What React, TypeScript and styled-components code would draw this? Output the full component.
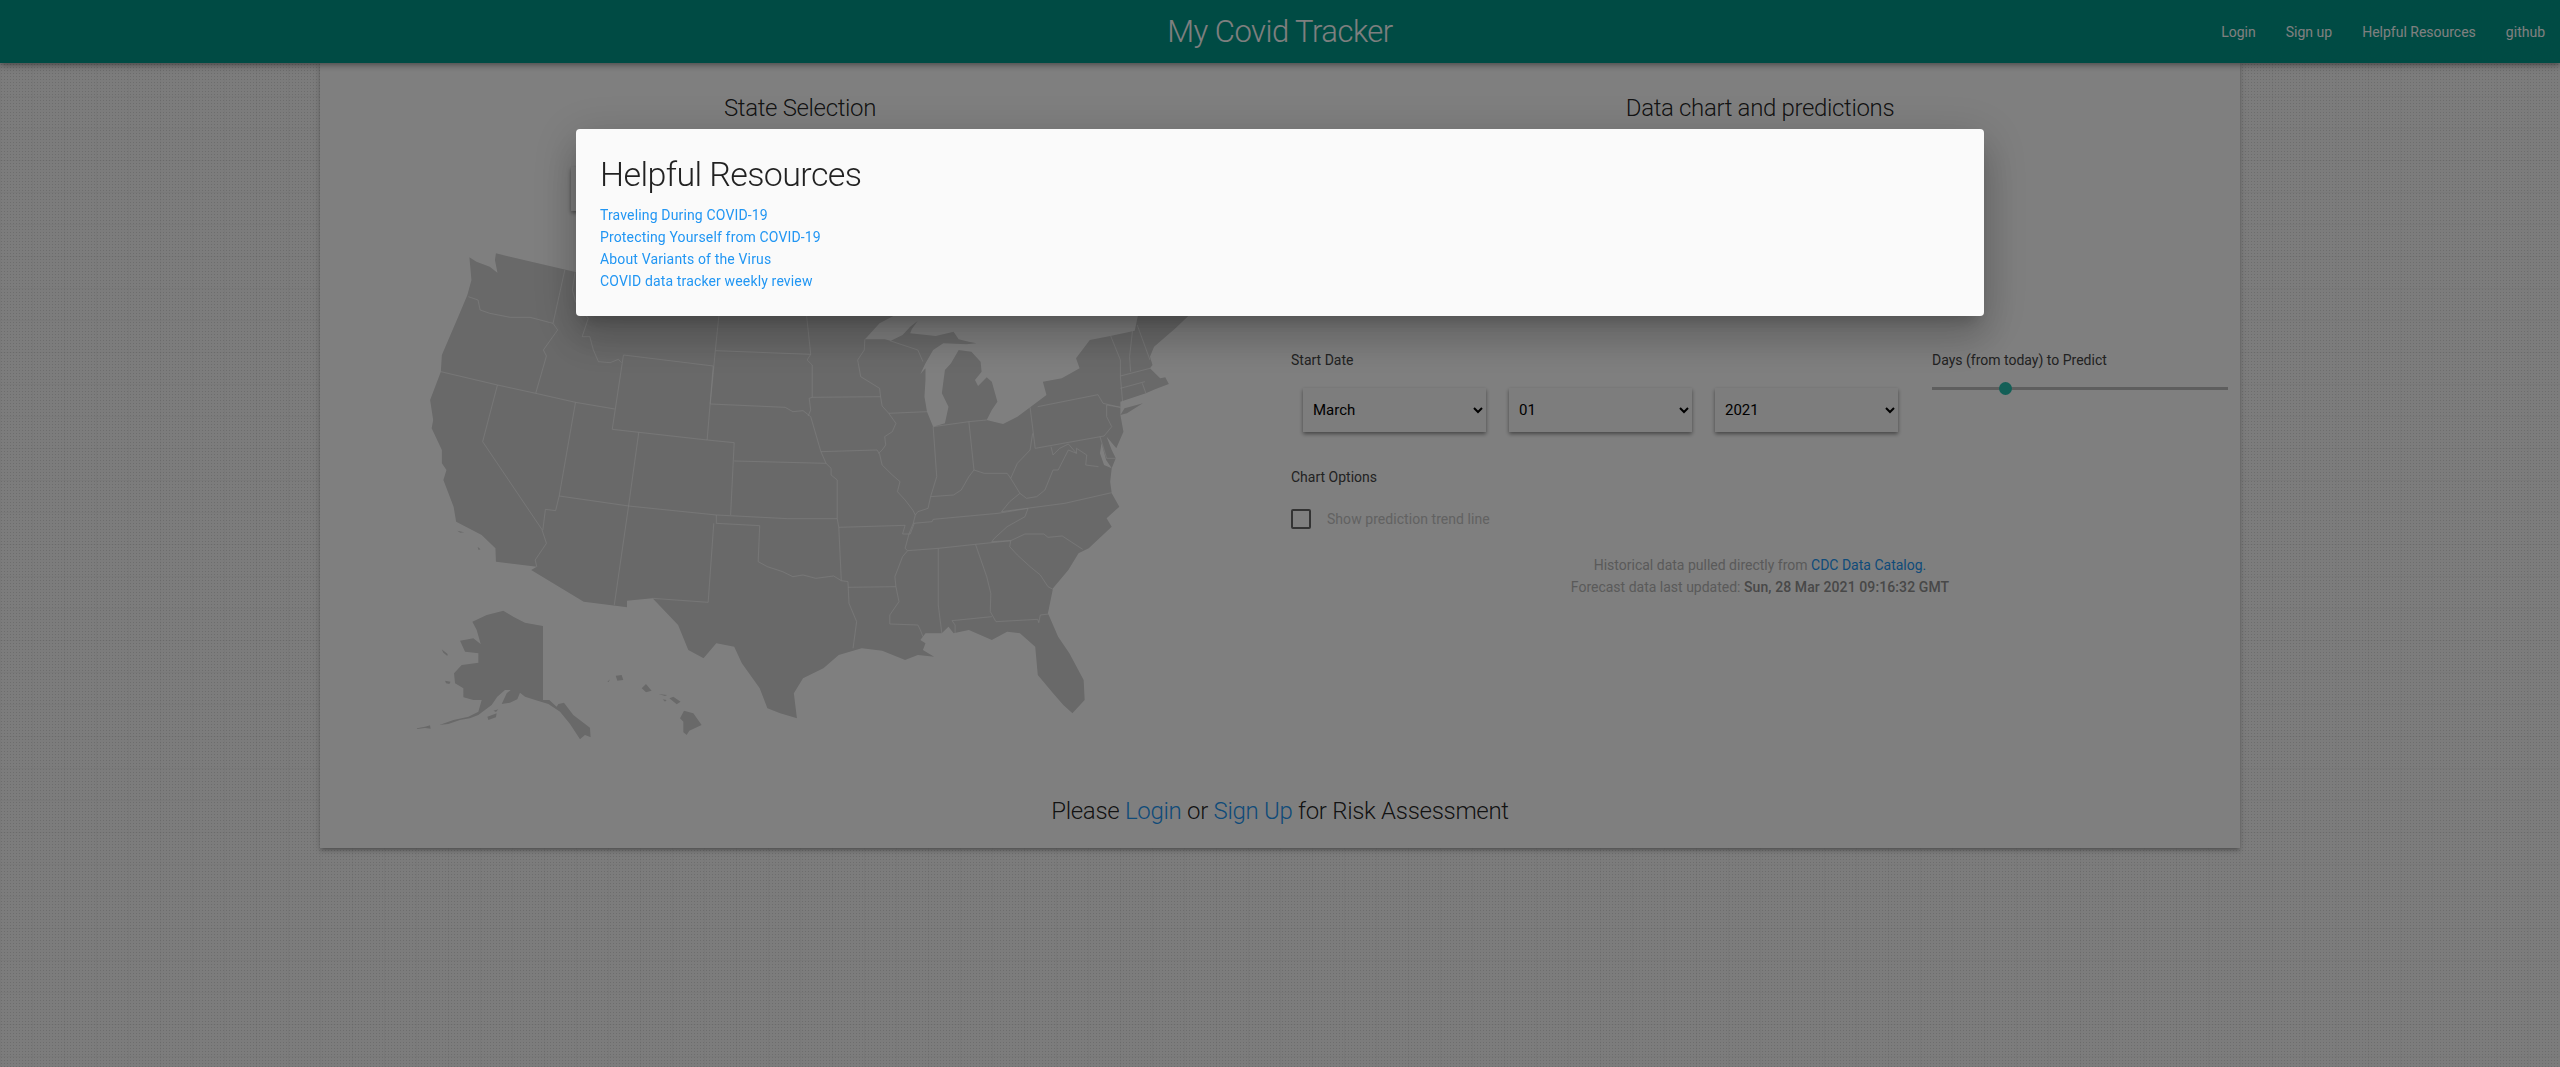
import React from "react";
import styled, { createGlobalStyle } from "styled-components";

const GlobalStyle = createGlobalStyle`
  html, body {
    margin: 0;
    height: 100%;
  }
  body {
    font-family: Roboto, "Open Sans", sans-serif;
    font-weight: 300;
    color: rgba(0, 0, 0, 0.87);
    background-color: #f8f8f8;
    background-image:
      linear-gradient(rgba(0, 0, 0, 0.025) 1px, transparent 1px),
      linear-gradient(90deg, rgba(0, 0, 0, 0.025) 1px, transparent 1px),
      radial-gradient(rgba(0, 0, 0, 0.12) 0.8px, transparent 1px);
    background-size: 32px 32px, 32px 32px, 3px 3px;
  }
`;

const Header = styled.header`
  position: relative;
  z-index: 2;
  height: 63px;
  background: #009688;
  color: #fff;
  display: flex;
  align-items: center;
  justify-content: flex-end;
  box-shadow: 0 2px 4px -1px rgba(0, 0, 0, 0.2), 0 4px 5px rgba(0, 0, 0, 0.14),
    0 1px 10px rgba(0, 0, 0, 0.12);
`;

const Brand = styled.div`
  position: absolute;
  left: 0;
  right: 0;
  text-align: center;
  font-size: 31px;
  letter-spacing: -0.5px;
`;

const NavLink = styled.a`
  position: relative;
  font-size: 14px;
  font-weight: 400;
  padding: 0 15px;
  color: #fff;
`;

const Card = styled.main`
  width: 1920px;
  height: 785px;
  margin: 0 auto;
  background: #fff;
  box-shadow: 0 3px 3px -2px rgba(0, 0, 0, 0.2), 0 3px 4px rgba(0, 0, 0, 0.14),
    0 1px 8px rgba(0, 0, 0, 0.12);
`;

const Columns = styled.div`
  display: grid;
  grid-template-columns: 960px 960px;
  height: 687px;
`;

const Column = styled.section`
  padding-top: 29px;
`;

const ColumnTitle = styled.h2`
  margin: 0;
  font-size: 24px;
  line-height: 33px;
  font-weight: 300;
  text-align: center;
  letter-spacing: -0.35px;
`;

const StateSelect = styled.select`
  display: block;
  width: 458px;
  height: 44px;
  margin: 42px auto 29px;
  border: 0;
  background: #fafafa;
  box-shadow: 0 2px 4px rgba(0, 0, 0, 0.4);
`;

const MapFrame = styled.svg`
  display: block;
  margin-left: 90px;
`;

const Land = styled.path`
  fill: #d3d3d3;
  fill-rule: evenodd;
`;

const Borders = styled.path`
  fill: none;
  stroke: rgba(255, 255, 255, 0.6);
  stroke-width: 1;
  stroke-linejoin: round;
  vector-effect: non-scaling-stroke;
`;

const ChartSlot = styled.div`
  height: 224px;
`;

const Controls = styled.div`
  padding-left: 11px;
`;

const ControlRow = styled.div`
  display: flex;
`;

const StartDate = styled.div`
  width: 641px;
`;

const Predict = styled.div`
  width: 296px;
`;

const Label = styled.div`
  font-size: 14px;
  line-height: 22px;
  font-weight: 400;
  color: #444;
`;

const SelectRow = styled.div`
  display: flex;
  gap: 23px;
  margin: 17px 0 34px 12px;
`;

const DateSelect = styled.select`
  width: 183px;
  height: 44px;
  padding-left: 6px;
  border: 0;
  border-radius: 0;
  background: #fafafa;
  color: #000;
  font-family: Roboto, sans-serif;
  font-size: 15px;
  box-shadow: 0 2px 4px rgba(0, 0, 0, 0.45);
`;

const Track = styled.div`
  position: relative;
  height: 3px;
  margin-top: 16px;
  background: #bdbdbd;
`;

const Thumb = styled.span<{ $left: number }>`
  position: absolute;
  top: -5px;
  left: ${(p) => p.$left}px;
  width: 13px;
  height: 13px;
  border-radius: 50%;
  background: #26bfae;
`;

const CheckRow = styled.label`
  display: flex;
  align-items: center;
  gap: 16px;
  margin-top: 21px;
  font-size: 14px;
  font-weight: 400;
  letter-spacing: 0.05px;
  color: #c4c4c4;
`;

const CheckBox = styled.span`
  box-sizing: border-box;
  width: 20px;
  height: 20px;
  border: 2px solid #666;
  border-radius: 2px;
`;

const Notes = styled.div`
  margin-top: 25px;
  text-align: center;
  font-size: 14px;
  line-height: 22px;
  font-weight: 400;
  color: #b4b4b4;
`;

const Strong = styled.b`
  font-weight: 500;
  letter-spacing: 0.1px;
  color: #909090;
`;

const TextLink = styled.a`
  color: #2196f3;
`;

const Footer = styled.div`
  padding-top: 45px;
  text-align: center;
  font-size: 24px;
  line-height: 33px;
  letter-spacing: -0.3px;
`;

const Overlay = styled.div`
  position: fixed;
  inset: 0;
  z-index: 10;
  background: rgba(0, 0, 0, 0.5);
  display: flex;
  justify-content: center;
  align-items: flex-start;
  padding-top: 129px;
`;

const Modal = styled.div`
  box-sizing: border-box;
  width: 1408px;
  height: 187px;
  padding: 24px;
  background: #fafafa;
  border-radius: 4px;
  box-shadow: 0 11px 15px -7px rgba(0, 0, 0, 0.2), 0 24px 38px 3px rgba(0, 0, 0, 0.14),
    0 9px 46px 8px rgba(0, 0, 0, 0.12);
`;

const ModalTitle = styled.h2`
  margin: 0 0 9px;
  font-size: 34px;
  line-height: 42px;
  font-weight: 300;
  letter-spacing: -0.6px;
`;

const ResourceLink = styled.a`
  display: block;
  font-size: 14px;
  line-height: 22px;
  font-weight: 400;
  letter-spacing: 0.15px;
  color: #2196f3;
`;

// traced from the reference, x/1.96 and y/3 against page point (400, 300)
const LAND =
  "M136,-128 150,-115 176,-100 191,-82 186,-120 188,-140 346,-83 967,0 967,48 940,70 915,112 911,118 950,118 962,122 985,105 1000,80 1015,62 1003,88 1000,100 1050,108 1085,95 1095,118 1115,125 1130,130 1110,133 1065,130 1045,150 1030,190 1020,222 1030,205 1030,240 1028,290 1033,335 1045,380 1068,370 1075,320 1062,280 1068,210 1080,190 1095,150 1120,155 1138,185 1140,215 1127,240 1133,258 1150,232 1160,245 1171,305 1160,330 1150,360 1182,372 1210,350 1235,322 1267,285 1260,245 1297,235 1332,205 1325,175 1352,120 1392,108 1440,92 1450,20 1540,20 1545,48 1520,85 1478,140 1470,170 1475,195 1470,205 1490,235 1500,232 1507,252 1480,268 1462,280 1412,305 1412,345 1418,395 1404,445 1385,410 1395,450 1403,475 1395,505 1392,545 1395,580 1410,620 1385,655 1395,680 1350,745 1330,760 1310,810 1280,865 1270,940 1290,1010 1312,1060 1340,1140 1342,1200 1318,1240 1300,1215 1280,1180 1250,1125 1245,1040 1215,1000 1190,995 1160,1020 1115,990 1085,1000 1075,980 1062,1000 1030,1000 1020,1020 1030,1030 1025,1050 1047,1070 1015,1065 990,1080 945,1052 905,1045 860,1065 830,1105 790,1135 772,1180 778,1255 745,1240 720,1225 705,1165 670,1090 655,1040 620,1030 595,1075 565,1050 545,975 495,895 445,902 445,922 360,905 257,810 268,800 188,785 187,745 160,705 110,665 105,620 85,540 91,510 82,490 82,450 62,385 65,360 59,300 80,215 82,165 117,40 132,-15 140,-60Z" +
  "M1456,310 1425,340 1412,345 1420,325Z" +
  "M1375,430 1384,480 1395,505 1380,495 1372,460Z" +
  "M112,692 126,697 118,698Z" +
  "M152,740 158,748 154,750Z";

const BORDERS =
  "M134,-10 153,0 157,30 176,40 216,52 255,52 300,70 309,90 281,150 287,168 266,280" +
  "M323,-90 300,70" +
  "M80,215 191,255 266,280 344,307 421,327" +
  "M343,-83 338,-30 344,5 369,55 357,110 372,110 379,150 389,185 412,188 428,178 434,188" +
  "M438,165 614,198 602,420 416,388Z" +
  "M344,307 312,588 448,618 620,645 760,656 857,656 860,682 990,676 985,702 1000,702 1008,670" +
  "M191,255 162,425 278,688 287,730 265,780 268,800" +
  "M312,588 305,632 285,628 280,690" +
  "M448,618 420,915" +
  "M468,397 448,618" +
  "M602,420 655,428 648,645" +
  "M620,645 620,670 705,677 702,785 720,800 750,815 770,830 790,825 815,835 850,828 865,842 878,845 880,910 895,965 888,1045" +
  "M615,670 604,907 495,895" +
  "M655,483 835,490 845,505 845,525 857,540 857,656" +
  "M608,312 755,322 770,335 790,332 805,350 825,455 835,490" +
  "M618,152 608,312" +
  "M618,152 805,163 798,180 808,195 808,292 802,295 805,330 800,348" +
  "M625,48 618,152" +
  "M797,48 805,163" +
  "M808,292 942,290 945,318 958,340 972,370 965,395 950,410 952,435 945,450 938,460" +
  "M911,118 910,150 897,180 903,230 940,265 942,290" +
  "M825,455 935,450 940,462 945,495 965,525 980,545 975,575 990,600 1005,630 1010,645 1006,670 998,700 990,745 995,752 985,770 970,830 972,860 978,905 960,945 960,972 1015,975 1020,990 1025,1010" +
  "M958,340 1033,335" +
  "M960,122 1015,150 1025,185" +
  "M1045,380 1052,530 1040,590 1035,625 1015,635 1010,645" +
  "M1045,380 1115,365 1150,360" +
  "M1115,365 1125,510" +
  "M1040,590 1085,585 1100,570 1115,530 1125,510 1145,520 1190,520 1197,535 1210,490 1235,450 1240,400" +
  "M1235,322 1245,445 1380,408 1395,380 1385,350 1385,315 1412,322 1378,310 1368,284 1250,320" +
  "M1393,108 1412,180 1412,230 1417,318" +
  "M1437,75 1430,170 1432,215" +
  "M1445,75 1470,180" +
  "M1412,228 1470,205" +
  "M1412,265 1460,245" +
  "M1455,250 1462,280" +
  "M1197,535 1215,580 1228,595 1248,590 1264,570 1280,510 1290,510 1310,450 1326,460 1310,432 1293,445 1280,465 1276,440" +
  "M1326,460 1326,445 1346,465 1344,495 1369,500" +
  "M1372,410 1385,475 1403,475" +
  "M1215,580 1195,605 1179,635 1303,610 1395,578" +
  "M1006,670 1043,665 1045,658 1172,640 1231,625 1225,650 1190,680 1165,715 1160,725 1197,722" +
  "M995,752 1055,745 1128,733 1197,722 1195,740 1210,765 1235,800 1255,825 1270,860 1280,868" +
  "M1197,722 1225,702 1262,702 1270,712 1298,708 1338,748" +
  "M860,682 865,842" +
  "M878,862 972,860" +
  "M1055,745 1055,915 1062,1000" +
  "M1128,733 1150,830 1158,880 1157,935 1168,965 1250,958 1252,968 1255,945 1272,942" +
  "M1082,962 1160,950" +
  "M1082,962 1088,975 1088,1000";

// these two sit on a plain 3x crop from page point (410, 500)
const ALASKA =
  "M187,365 230,345 280,332 310,350 345,368 399,378 399,600 418,600 440,620 445,612 462,608 490,645 540,683 542,712 525,705 510,718 480,672 450,635 415,612 385,603 345,590 330,578 322,598 300,608 275,612 290,580 302,570 285,570 262,590 245,615 205,645 180,655 150,660 115,672 88,675 130,660 175,650 205,635 215,600 190,600 160,592 160,565 135,550 132,520 155,495 205,488 205,460 165,455 150,422 190,415 212,432 200,390Z" +
  "M95,448 113,462 112,468 100,458Z" +
  "M105,542 122,545 118,552 108,550Z" +
  "M232,650 260,640 258,652 235,660Z" +
  "M250,632 265,628 258,636Z" +
  "M20,685 45,680 60,676 62,686 45,684 22,687Z";

const HAWAII =
  "M617,527 635,525 640,540 622,542Z" +
  "M592,545 600,538 596,546Z" +
  "M695,565 708,552 725,572 708,577Z" +
  "M745,582 772,585 765,588Z" +
  "M778,595 790,590 812,605 800,613Z" +
  "M758,598 770,600 765,605Z" +
  "M822,632 850,640 875,675 838,692 830,705 820,697 820,665 810,655Z";

const UsMap = () => (
  <MapFrame width="790" height="510" viewBox="410 240 790 510">
    <g transform="translate(400 300) scale(0.5102 0.33333)">
      <Land d={LAND} />
      <Borders d={BORDERS} />
    </g>
    <g transform="translate(410 500) scale(0.33333)">
      <Land d={ALASKA} />
      <Land d={HAWAII} />
    </g>
  </MapFrame>
);

const links = [
  "Traveling During COVID-19",
  "Protecting Yourself from COVID-19",
  "About Variants of the Virus",
  "COVID data tracker weekly review"
];

export default function App() {
  return (
    <>
      <GlobalStyle />
      <Header>
        <Brand>My Covid Tracker</Brand>
        <NavLink>Login</NavLink>
        <NavLink>Sign up</NavLink>
        <NavLink>Helpful Resources</NavLink>
        <NavLink>github</NavLink>
      </Header>
      <Card>
        <Columns>
          <Column>
            <ColumnTitle>State Selection</ColumnTitle>
            <StateSelect aria-label="State" />
            <UsMap />
          </Column>
          <Column>
            <ColumnTitle>Data chart and predictions</ColumnTitle>
            <ChartSlot />
            <Controls>
              <ControlRow>
                <StartDate>
                  <Label>Start Date</Label>
                  <SelectRow>
                    <DateSelect defaultValue="March">
                      <option>March</option>
                    </DateSelect>
                    <DateSelect defaultValue="01">
                      <option>01</option>
                    </DateSelect>
                    <DateSelect defaultValue="2021">
                      <option>2021</option>
                    </DateSelect>
                  </SelectRow>
                </StartDate>
                <Predict>
                  <Label>Days (from today) to Predict</Label>
                  <Track>
                    <Thumb $left={67} />
                  </Track>
                </Predict>
              </ControlRow>
              <Label>Chart Options</Label>
              <CheckRow>
                <CheckBox />
                Show prediction trend line
              </CheckRow>
            </Controls>
            <Notes>
              Historical data pulled directly from <TextLink>CDC Data Catalog.</TextLink>
              <br />
              Forecast data last updated: <Strong>Sun, 28 Mar 2021 09:16:32 GMT</Strong>
            </Notes>
          </Column>
        </Columns>
        <Footer>
          Please <TextLink>Login</TextLink> or <TextLink>Sign Up</TextLink> for Risk Assessment
        </Footer>
      </Card>
      <Overlay>
        <Modal>
          <ModalTitle>Helpful Resources</ModalTitle>
          {links.map((l) => (
            <ResourceLink key={l}>{l}</ResourceLink>
          ))}
        </Modal>
      </Overlay>
    </>
  );
}
